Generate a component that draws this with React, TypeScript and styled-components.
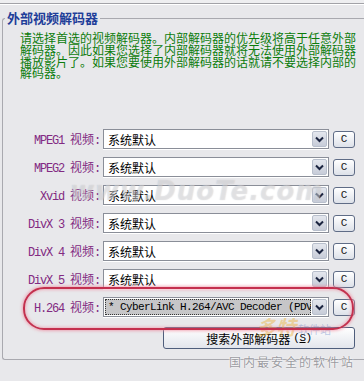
import React from "react";
import styled, { createGlobalStyle } from "styled-components";

const Global = createGlobalStyle`
  html, body {
    margin: 0;
    padding: 0;
    background: #e8e8eb;
    overflow: hidden;
  }
  body {
    font-family: "Noto Sans CJK SC", "Noto Sans", sans-serif;
  }
`;

const Page = styled.div`
  position: relative;
  width: 364px;
  height: 381px;
  overflow: hidden;
  background: #e8e8eb;
`;

const TopRule = styled.div`
  height: 3px;
  background: #eeeef0;
  border-bottom: 1px solid #a2a2a7;
  box-shadow: 0 1px 0 #ffffff;
`;

const Group = styled.fieldset`
  margin: 7px 0 0 2px;
  padding: 0 0 10px 0;
  width: 380px;
  box-sizing: border-box;
  border: 1px solid #a9a9af;
  border-right: none;
  border-radius: 3px 0 0 3px;
  min-width: 0;
`;

const Legend = styled.legend`
  margin-left: 2px;
  padding: 0 2px;
  font-family: "Noto Sans CJK SC", sans-serif;
  font-weight: 700;
  font-size: 13px;
  line-height: 14px;
  color: #1f3e99;
`;

const Desc = styled.div`
  margin: 7px 0 0 17px;
  font-family: "Noto Sans CJK SC", sans-serif;
  font-size: 12px;
  line-height: 11.8px;
  color: #0c7c0c;
`;

const DescLine = styled.div`
  white-space: nowrap;
`;

const Rows = styled.div`
  margin-top: 50px;
  display: flex;
  flex-direction: column;
  gap: 8px;
`;

const Row = styled.div`
  display: flex;
  align-items: center;
  height: 20px;
`;

const Label = styled.div`
  width: 97px;
  display: flex;
  justify-content: flex-end;
  align-items: baseline;
  white-space: nowrap;
  color: #822a82;
`;

const Latin = styled.span`
  font-family: "Liberation Mono", monospace;
  font-size: 12px;
  letter-spacing: -1.2px;
`;

const Han = styled.span`
  font-family: "Noto Sans CJK SC", sans-serif;
  font-size: 12px;
`;

const Combo = styled.div<{ $selected?: boolean }>`
  margin-left: 3px;
  width: 226px;
  height: 20px;
  box-sizing: border-box;
  display: flex;
  align-items: center;
  border: 1px solid #8a8e98;
  box-shadow: 0 1px 0 #ffffff;
  background: #ffffff;
  padding: 1px;
`;

const ComboText = styled.div<{ $selected?: boolean }>`
  flex: 1;
  height: 16px;
  display: flex;
  align-items: center;
  padding-left: 3px;
  overflow: hidden;
  white-space: nowrap;
  color: #000000;
  font-family: "Noto Sans CJK SC", sans-serif;
  font-size: 12px;
  background: ${(p) => (p.$selected ? "#c6c6c8" : "transparent")};
  outline: ${(p) => (p.$selected ? "1px dotted #333" : "none")};
  outline-offset: -1px;
`;

const MonoValue = styled.span`
  font-family: "Liberation Mono", monospace;
  font-size: 11px;
  letter-spacing: -0.6px;
`;

const ArrowBtn = styled.div`
  width: 15px;
  height: 16px;
  margin-left: 1px;
  box-sizing: border-box;
  border: 1px solid #b8bfcc;
  border-radius: 2px;
  background: linear-gradient(#e4e7ee, #c7ccd8);
  display: flex;
  align-items: center;
  justify-content: center;
`;

const CButton = styled.div`
  margin-left: 4px;
  width: 22px;
  height: 17px;
  box-sizing: border-box;
  border: 1px solid #5f6c86;
  border-radius: 3px;
  background: linear-gradient(#ffffff, #dde1e9);
  display: flex;
  align-items: center;
  justify-content: center;
  font-family: "Liberation Mono", monospace;
  font-size: 11px;
  color: #1a1a1a;
`;

const SearchRow = styled.div`
  margin-top: 10px;
  padding-left: 160px;
`;

const SearchButton = styled.div`
  width: 192px;
  height: 22px;
  box-sizing: border-box;
  border: 1px solid #4f5e7c;
  border-radius: 3px;
  background: linear-gradient(#ffffff, #e2e5ec);
  display: flex;
  align-items: center;
  justify-content: center;
  font-family: "Noto Sans CJK SC", sans-serif;
  font-size: 12px;
  color: #000;
  gap: 3px;
`;

const Key = styled.span`
  font-family: "Liberation Mono", monospace;
  font-size: 11px;
  letter-spacing: -0.5px;
  u {
    text-decoration: underline;
  }
`;

const Annotation = styled.div`
  position: absolute;
  left: 23px;
  top: 287px;
  width: 331px;
  height: 43px;
  box-sizing: border-box;
  border: 2px solid #c4304e;
  border-radius: 21px;
  box-shadow: 0 0 3px 1px rgba(240, 140, 160, 0.7), inset 0 0 3px 1px rgba(240, 140, 160, 0.6);
  pointer-events: none;
`;

const Watermark = styled.div`
  position: absolute;
  left: 70px;
  top: 176px;
  font-family: "DejaVu Sans", sans-serif;
  font-weight: 700;
  font-style: italic;
  font-size: 26px;
  letter-spacing: 1px;
  color: rgba(255, 255, 255, 0.35);
  text-shadow: 0 0 1px rgba(120, 120, 130, 0.35);
  pointer-events: none;
`;

const LogoMark = styled.div`
  position: absolute;
  left: 256px;
  top: 312px;
  display: flex;
  align-items: flex-end;
  gap: 2px;
  pointer-events: none;
`;

const LogoHan = styled.span`
  font-family: "Noto Sans CJK SC", sans-serif;
  font-weight: 700;
  font-style: italic;
  font-size: 20px;
  color: rgba(235, 175, 50, 0.45);
`;

const LogoSmall = styled.span`
  font-family: "Noto Sans CJK SC", sans-serif;
  font-size: 11px;
  color: rgba(90, 130, 200, 0.4);
  padding-bottom: 4px;
`;

const Slogan = styled.div`
  position: absolute;
  left: 229px;
  top: 353px;
  font-family: "Noto Sans CJK SC", sans-serif;
  font-size: 12px;
  letter-spacing: 2px;
  color: #9a9aa0;
  text-shadow: 0 0 2px #ffffff, 0 0 1px #ffffff;
  pointer-events: none;
`;

const Chevron = () => (
  <svg width="9" height="7" viewBox="0 0 9 7">
    <path d="M1 1.5 L4.5 5 L8 1.5" fill="none" stroke="#1b2440" strokeWidth="2" />
  </svg>
);

const codecs = ["MPEG1", "MPEG2", "Xvid", "DivX 3", "DivX 4", "DivX 5"];

export default function App() {
  return (
    <Page>
      <Global />
      <TopRule />
      <Group>
        <Legend>外部视频解码器</Legend>
        <Desc>
          <DescLine>请选择首选的视频解码器。内部解码器的优先级将高于任意外部</DescLine>
          <DescLine>解码器。因此如果您选择了内部解码器就将无法使用外部解码器</DescLine>
          <DescLine>播放影片了。如果您要使用外部解码器的话就请不要选择内部的</DescLine>
          <DescLine>解码器。</DescLine>
        </Desc>
        <Rows>
          {codecs.map((c) => (
            <Row key={c}>
              <Label>
                <Latin>{c}&nbsp;</Latin>
                <Han>视频</Han>
                <Latin>:</Latin>
              </Label>
              <Combo>
                <ComboText>系统默认</ComboText>
                <ArrowBtn>
                  <Chevron />
                </ArrowBtn>
              </Combo>
              <CButton>C</CButton>
            </Row>
          ))}
          <Row>
            <Label>
              <Latin>H.264&nbsp;</Latin>
              <Han>视频</Han>
              <Latin>:</Latin>
            </Label>
            <Combo>
              <ComboText $selected>
                <MonoValue>* CyberLink H.264/AVC Decoder (PDVD8)</MonoValue>
              </ComboText>
              <ArrowBtn>
                <Chevron />
              </ArrowBtn>
            </Combo>
            <CButton>C</CButton>
          </Row>
        </Rows>
        <SearchRow>
          <SearchButton>
            <span>搜索外部解码器</span>
            <Key>
              (<u>S</u>)
            </Key>
          </SearchButton>
        </SearchRow>
      </Group>
      <Watermark>www.DuoTe.com</Watermark>
      <LogoMark>
        <LogoHan>多特</LogoHan>
        <LogoSmall>软件站</LogoSmall>
      </LogoMark>
      <Slogan>国内最安全的软件站</Slogan>
      <Annotation />
    </Page>
  );
}
